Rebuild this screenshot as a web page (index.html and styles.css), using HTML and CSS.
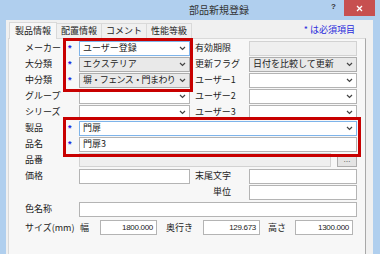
FILE: index.html
```html
<!DOCTYPE html>
<html lang="ja">
<head>
  <meta charset="UTF-8" />
  <meta name="viewport" content="width=device-width, initial-scale=1.0" />
  <title>部品新規登録</title>
  <link rel="stylesheet" href="styles.css">
</head>
<body>
  <div class="window">
    <div class="titlebar">
      <span class="title">部品新規登録</span>
      <span class="help">?</span>
      <span class="close">
        <svg width="7" height="7" viewBox="0 0 7 7"><path d="M1 1 L6 6 M6 1 L1 6" stroke="#fff" stroke-width="1.3" fill="none"/></svg>
      </span>
    </div>

    <div class="client">
      <div class="tabrow">
        <div class="tab active">製品情報</div>
        <div class="tab">配置情報</div>
        <div class="tab">コメント</div>
        <div class="tab">性能等級</div>
        <span class="note">* は必須項目</span>
      </div>

      <div class="panel">
        <div class="form">
          <span class="lbl">メーカー</span><span class="req">*</span>
          <div class="fld combo focus"><span>ユーザー登録</span><svg class="chev" width="7" height="5" viewBox="0 0 7 5"><path d="M1 1 L3.5 3.5 L6 1" stroke="#444" stroke-width="1.2" fill="none"/></svg></div>
          <span class="rlbl">有効期限</span>
          <div class="fld off"></div>

          <span class="lbl">大分類</span><span class="req">*</span>
          <div class="fld combo gray"><span>エクステリア</span><svg class="chev" width="7" height="5" viewBox="0 0 7 5"><path d="M1 1 L3.5 3.5 L6 1" stroke="#444" stroke-width="1.2" fill="none"/></svg></div>
          <span class="rlbl">更新フラグ</span>
          <div class="fld combo gray"><span>日付を比較して更新</span><svg class="chev" width="7" height="5" viewBox="0 0 7 5"><path d="M1 1 L3.5 3.5 L6 1" stroke="#444" stroke-width="1.2" fill="none"/></svg></div>

          <span class="lbl">中分類</span><span class="req">*</span>
          <div class="fld combo gray"><span class="tight">塀・フェンス・門まわり</span><svg class="chev" width="7" height="5" viewBox="0 0 7 5"><path d="M1 1 L3.5 3.5 L6 1" stroke="#444" stroke-width="1.2" fill="none"/></svg></div>
          <span class="rlbl">ユーザー1</span>
          <div class="fld combo"><svg class="chev" width="7" height="5" viewBox="0 0 7 5"><path d="M1 1 L3.5 3.5 L6 1" stroke="#444" stroke-width="1.2" fill="none"/></svg></div>

          <span class="lbl">グループ</span>
          <div class="fld combo mid"><svg class="chev" width="7" height="5" viewBox="0 0 7 5"><path d="M1 1 L3.5 3.5 L6 1" stroke="#444" stroke-width="1.2" fill="none"/></svg></div>
          <span class="rlbl">ユーザー2</span>
          <div class="fld combo"><svg class="chev" width="7" height="5" viewBox="0 0 7 5"><path d="M1 1 L3.5 3.5 L6 1" stroke="#444" stroke-width="1.2" fill="none"/></svg></div>

          <span class="lbl">シリーズ</span>
          <div class="fld combo mid"><svg class="chev" width="7" height="5" viewBox="0 0 7 5"><path d="M1 1 L3.5 3.5 L6 1" stroke="#444" stroke-width="1.2" fill="none"/></svg></div>
          <span class="rlbl">ユーザー3</span>
          <div class="fld combo"><svg class="chev" width="7" height="5" viewBox="0 0 7 5"><path d="M1 1 L3.5 3.5 L6 1" stroke="#444" stroke-width="1.2" fill="none"/></svg></div>

          <span class="lbl">製品</span><span class="req">*</span>
          <div class="fld combo focus wide"><span>門扉</span><svg class="chev" width="7" height="5" viewBox="0 0 7 5"><path d="M1 1 L3.5 3.5 L6 1" stroke="#444" stroke-width="1.2" fill="none"/></svg></div>

          <span class="lbl">品名</span><span class="req">*</span>
          <div class="fld wide"><span>門扉3</span></div>

          <span class="lbl">品番</span>
          <div class="pick wide">
            <div class="fld off"></div>
            <span class="dots">…</span>
          </div>

          <span class="lbl">価格</span>
          <div class="fld mid"></div>
          <span class="rlbl">末尾文字</span>
          <div class="fld"></div>

          <span class="rlbl unit">単位</span>
          <div class="fld"></div>

          <span class="lbl">色名称</span>
          <div class="fld wide"></div>

          <div class="size">
            <span class="size-lbl">サイズ(mm)</span>
            <span class="w-lbl">幅</span>
            <div class="fld num w1">1800.000</div>
            <span class="d-lbl">奥行き</span>
            <div class="fld num w1">129.673</div>
            <span class="h-lbl">高さ</span>
            <div class="fld num w2">1300.000</div>
          </div>

          <div class="mark mark-top"></div>
          <div class="mark mark-bottom"></div>
        </div>
      </div>
    </div>
  </div>
</body>
</html>
```

FILE: styles.css
```css
body { margin: 0; width: 380px; height: 254px; overflow: hidden; background: #b0cfee; font-family: "Noto Sans CJK JP", sans-serif; font-size: 9px; color: #222; }
.window { display: flex; flex-direction: column; height: 254px; }

.titlebar { height: 20px; display: flex; align-items: flex-start; padding-left: 189px; }
.title { font-size: 10px; line-height: 20px; color: #333; }
.help { margin-left: auto; margin-right: 8px; margin-top: 2px; font-family: "Liberation Sans", sans-serif; font-weight: bold; font-size: 8px; color: #333; }
.close { width: 31px; height: 16px; margin-right: 5px; background: #c75050; display: flex; align-items: center; justify-content: center; }

.client { flex: 1; display: flex; flex-direction: column; margin: 0 7px 0 6px; background: #f0f0f0; }

.tabrow { height: 18px; display: flex; align-items: flex-end; padding-left: 3px; }
.tab { height: 15px; box-sizing: border-box; padding: 0 4px; margin-right: -1px; border: 1px solid #d9d9d9; border-bottom: none; line-height: 13px; background: #f0f0f0; }
.tab.active { height: 17px; margin-bottom: -1px; padding: 0 5px; background: #f7f7f7; position: relative; z-index: 1; line-height: 16px; }
.note { margin-left: auto; margin-right: 18px; align-self: center; color: #2a2adc; }

.panel { flex: 1; margin: 0 7px 0 2px; border: 1px solid #d9d9d9; border-right-color: #a8a8a8; border-bottom: none; background: #f7f7f7; padding: 1px 0 0 16px; }

.form { position: relative; display: grid; grid-template-columns: 38px 16px 111px 59px 108px; grid-template-rows: repeat(10, 16px) 18px 19px; align-items: center; }
.lbl { line-height: 12px; white-space: nowrap; }
.req { color: #2020e0; font-family: "Liberation Sans", sans-serif; font-size: 9px; font-weight: bold; padding-left: 5px; line-height: 9px; }
.rlbl { padding-left: 5px; line-height: 12px; white-space: nowrap; }
.unit { grid-column: 4; padding-left: 23px; }
.mid { grid-column: 3; }
.wide { grid-column: 3 / 6; }

.fld { height: 15px; box-sizing: border-box; border: 1px solid #b4b4b4; background: #fff; display: flex; align-items: center; padding: 0 3px; line-height: 12px; white-space: nowrap; overflow: hidden; }
.combo .chev { margin-left: auto; flex: none; }
.gray { background: #e9e9e9; border-color: #adadad; }
.focus { border-color: #7eb4ea; }
.off { background: #efefef; border-color: #d2d2d2; }
.tight { letter-spacing: -0.6px; }

.pick { display: flex; align-items: center; gap: 6px; }
.pick .off { flex: 1; height: 14px; }
.dots { width: 20px; height: 11px; margin-top: 3px; box-sizing: border-box; border: 1px solid #adadad; background: #e4e4e4; font-size: 7px; line-height: 8px; text-align: center; color: #555; }

.size { grid-column: 1 / -1; display: flex; align-items: center; }
.size-lbl { width: 55px; white-space: nowrap; }
.w-lbl { width: 20px; }
.d-lbl { width: 37px; margin-left: 9px; }
.h-lbl { width: 27px; margin-left: 8px; }
.num { justify-content: flex-end; font-family: "Liberation Sans", sans-serif; font-size: 8px; letter-spacing: -0.3px; align-items: flex-start; padding-top: 1px; }
.w1 { width: 57px; }
.w2 { width: 58px; }

.mark { position: absolute; border: 3px solid #c80000; }
.mark-top { grid-row: 1 / 4; grid-column: 2 / 4; top: -2px; left: 0; right: -3px; bottom: -4px; }
.mark-bottom { grid-row: 6 / 8; grid-column: 2 / 6; top: -3px; left: 0; right: -4px; bottom: -5px; }
```
